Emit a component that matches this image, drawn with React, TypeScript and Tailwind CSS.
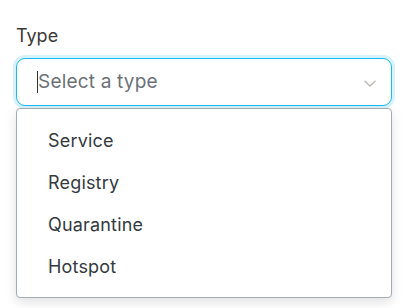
const types = ["Service", "Registry", "Quarantine", "Hotspot"];

const App = () => {
  return (
    <div
      className="w-[405px] h-[308px] bg-white pl-4 pt-[24px]"
      style={{ fontFamily: "Inter, 'Liberation Sans', sans-serif" }}
    >
      {/* Label */}
      <label className="block text-[18px] leading-[24px] text-[#3b3a36]">Type</label>

      <div className="w-[376px]">
        {/* Select input */}
        <div className="mt-[10px] flex h-[48px] items-center rounded-[9px] border border-[#1cb9ef] bg-white pl-5 pr-[15px] ring-[3px] ring-[#d6f3fc]">
          <span className="h-[22px] w-px bg-[#333]" />
          <span className="flex-1 text-[19px] tracking-[0.01em] text-[#6b7177]">Select a type</span>
          <svg width="12" height="7" viewBox="0 0 12 7" fill="none" className="mt-[2px]">
            <path d="M0.5 0.8 L6 6 L11.5 0.8" stroke="#bdb8b3" strokeWidth="1.3" />
          </svg>
        </div>

        {/* Options */}
        <ul className="mt-[2px] rounded-[4px] border border-[#a3acb3] bg-white pt-[10px] pb-[10px] shadow-[0_4px_12px_rgba(0,0,0,0.12)]">
          {types.map((t) => (
            <li key={t} className="flex h-[42px] items-center pl-[31px] text-[18px] tracking-[0.01em] text-[#343a40]">
              {t}
            </li>
          ))}
        </ul>
      </div>
    </div>
  );
};

export default App;
